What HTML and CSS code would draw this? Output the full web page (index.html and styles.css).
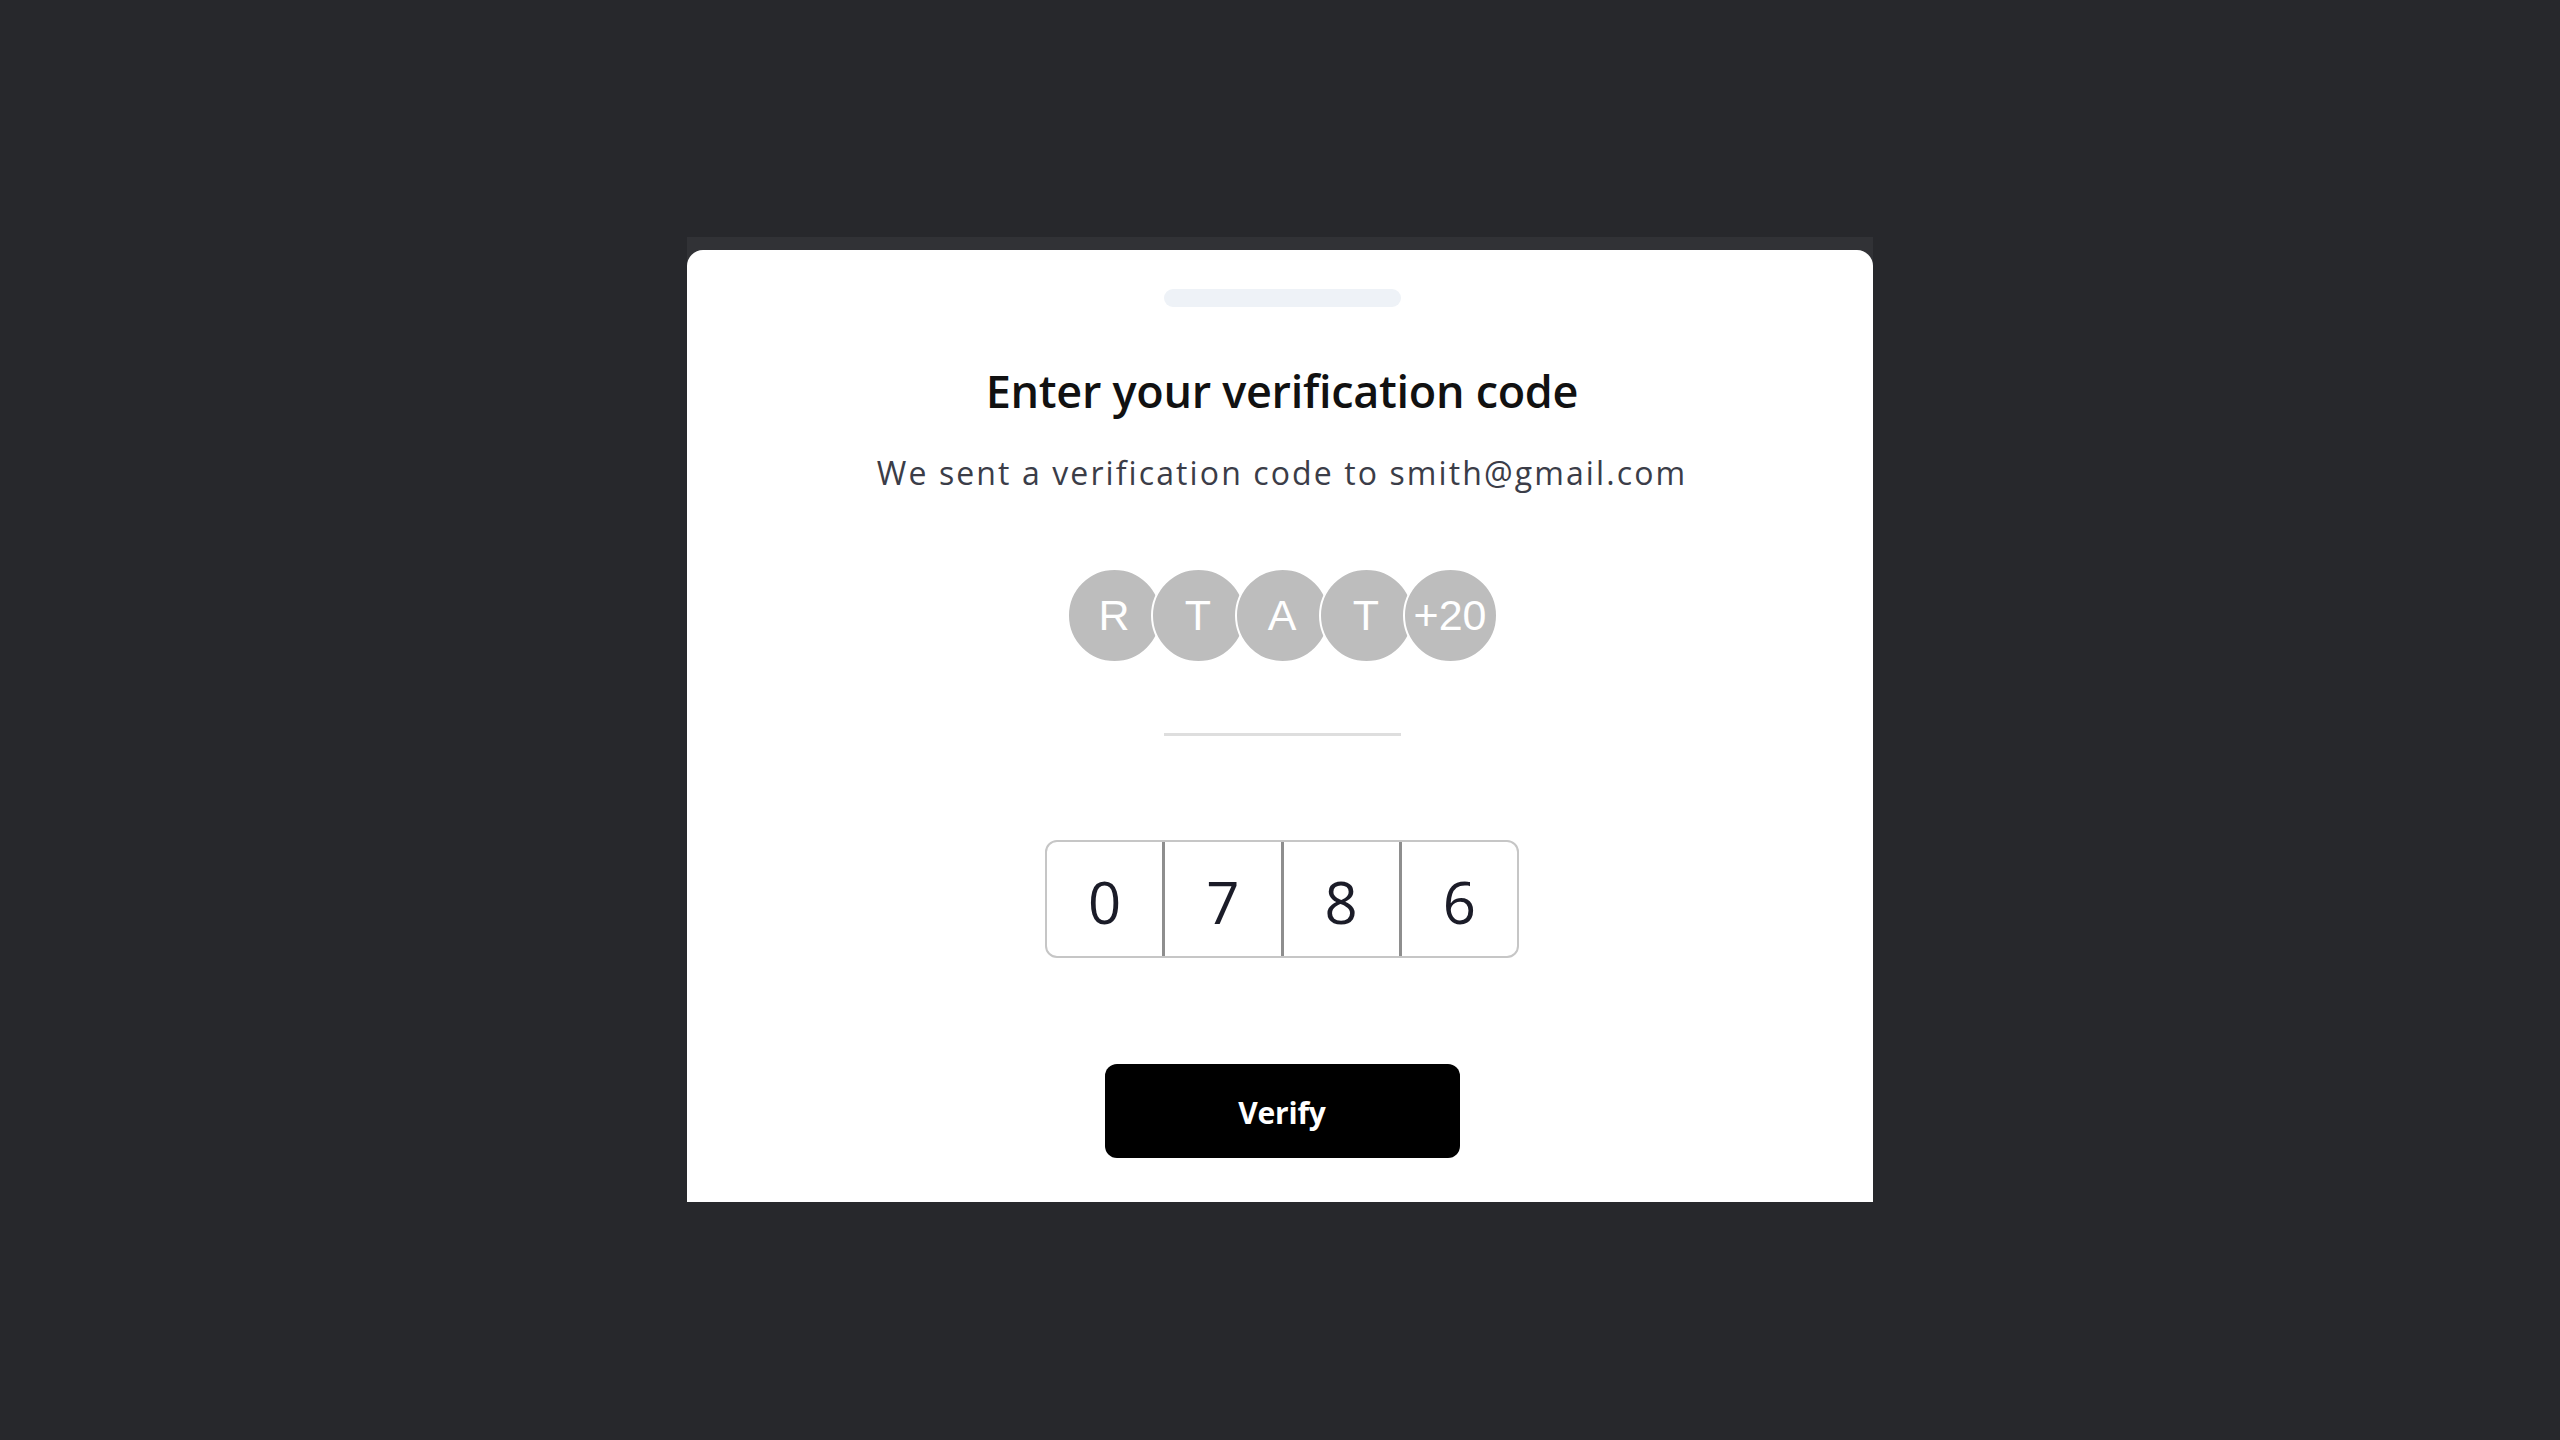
FILE: index.html
```html
<!DOCTYPE html>
<html lang="en">
<head>
<meta charset="utf-8">
<title>Verification</title>
<link rel="stylesheet" href="styles.css">
</head>
<body>
<div class="stage">
  <div class="frame">
    <div class="card">
      <div class="handle"></div>
      <h1 class="title">Enter your verification code</h1>
      <p class="subtitle">We sent a verification code to smith@gmail.com</p>
      <div class="avatars">
        <span class="avatar">R</span>
        <span class="avatar">T</span>
        <span class="avatar">A</span>
        <span class="avatar">T</span>
        <span class="avatar">+20</span>
      </div>
      <div class="divider"></div>
      <div class="otp">
        <span class="otp-cell">0</span>
        <span class="otp-cell">7</span>
        <span class="otp-cell">8</span>
        <span class="otp-cell">6</span>
      </div>
      <button class="verify" type="button">Verify</button>
    </div>
  </div>
</div>
</body>
</html>
```

FILE: styles.css
```css
html, body {
  margin: 0;
  padding: 0;
  background: #27282c;
  height: 100%;
}

.stage {
  display: flex;
  justify-content: center;
  padding-top: 237px;
}

.frame {
  width: 1186px;
  background: #313236;
  padding-top: 13px;
}

.card {
  background: #ffffff;
  border-radius: 16px 16px 0 0;
  display: flex;
  flex-direction: column;
  align-items: center;
  padding: 39px 0 44px 4px;
  font-family: "Open Sans", "Noto Sans", sans-serif;
}

.handle {
  width: 237px;
  height: 18px;
  border-radius: 9px;
  background: #eef2f7;
}

.title {
  margin: 56px 0 0;
  font-size: 45px;
  line-height: 56px;
  font-weight: 600;
  color: #111111;
  letter-spacing: -0.3px;
}

.subtitle {
  margin: 34px 0 0;
  font-size: 32px;
  line-height: 40px;
  font-weight: 400;
  color: #3b3d48;
  letter-spacing: 2.1px;
}

.avatars {
  margin-top: 75px;
  display: flex;
}

.avatar {
  box-sizing: border-box;
  width: 95px;
  height: 95px;
  border-radius: 50%;
  border: 2px solid #ffffff;
  background: #bdbdbd;
  color: #ffffff;
  display: flex;
  align-items: center;
  justify-content: center;
  font-family: "Liberation Sans", Arial, sans-serif;
  font-size: 43px;
  white-space: nowrap;
  margin-left: -11px;
}

.avatar:first-child {
  margin-left: 0;
}

.divider {
  margin-top: 70px;
  width: 237px;
  height: 3px;
  background: #dedede;
}

.otp {
  margin-top: 104px;
  box-sizing: border-box;
  width: 474px;
  height: 118px;
  display: flex;
  border: 2px solid #c6c6c6;
  border-radius: 12px;
  overflow: hidden;
}

.otp-cell {
  flex: 1;
  display: flex;
  align-items: center;
  justify-content: center;
  padding-top: 4px;
  font-size: 58px;
  color: #1b1c28;
  border-left: 3px solid #8e8e8e;
}

.otp-cell:first-child {
  border-left: none;
}

.verify {
  margin-top: 106px;
  width: 355px;
  height: 94px;
  border: none;
  border-radius: 12px;
  background: #000000;
  color: #ffffff;
  font-family: "Open Sans", "Noto Sans", sans-serif;
  font-size: 30px;
  font-weight: 700;
  letter-spacing: -0.2px;
  padding-top: 3px;
}
```
